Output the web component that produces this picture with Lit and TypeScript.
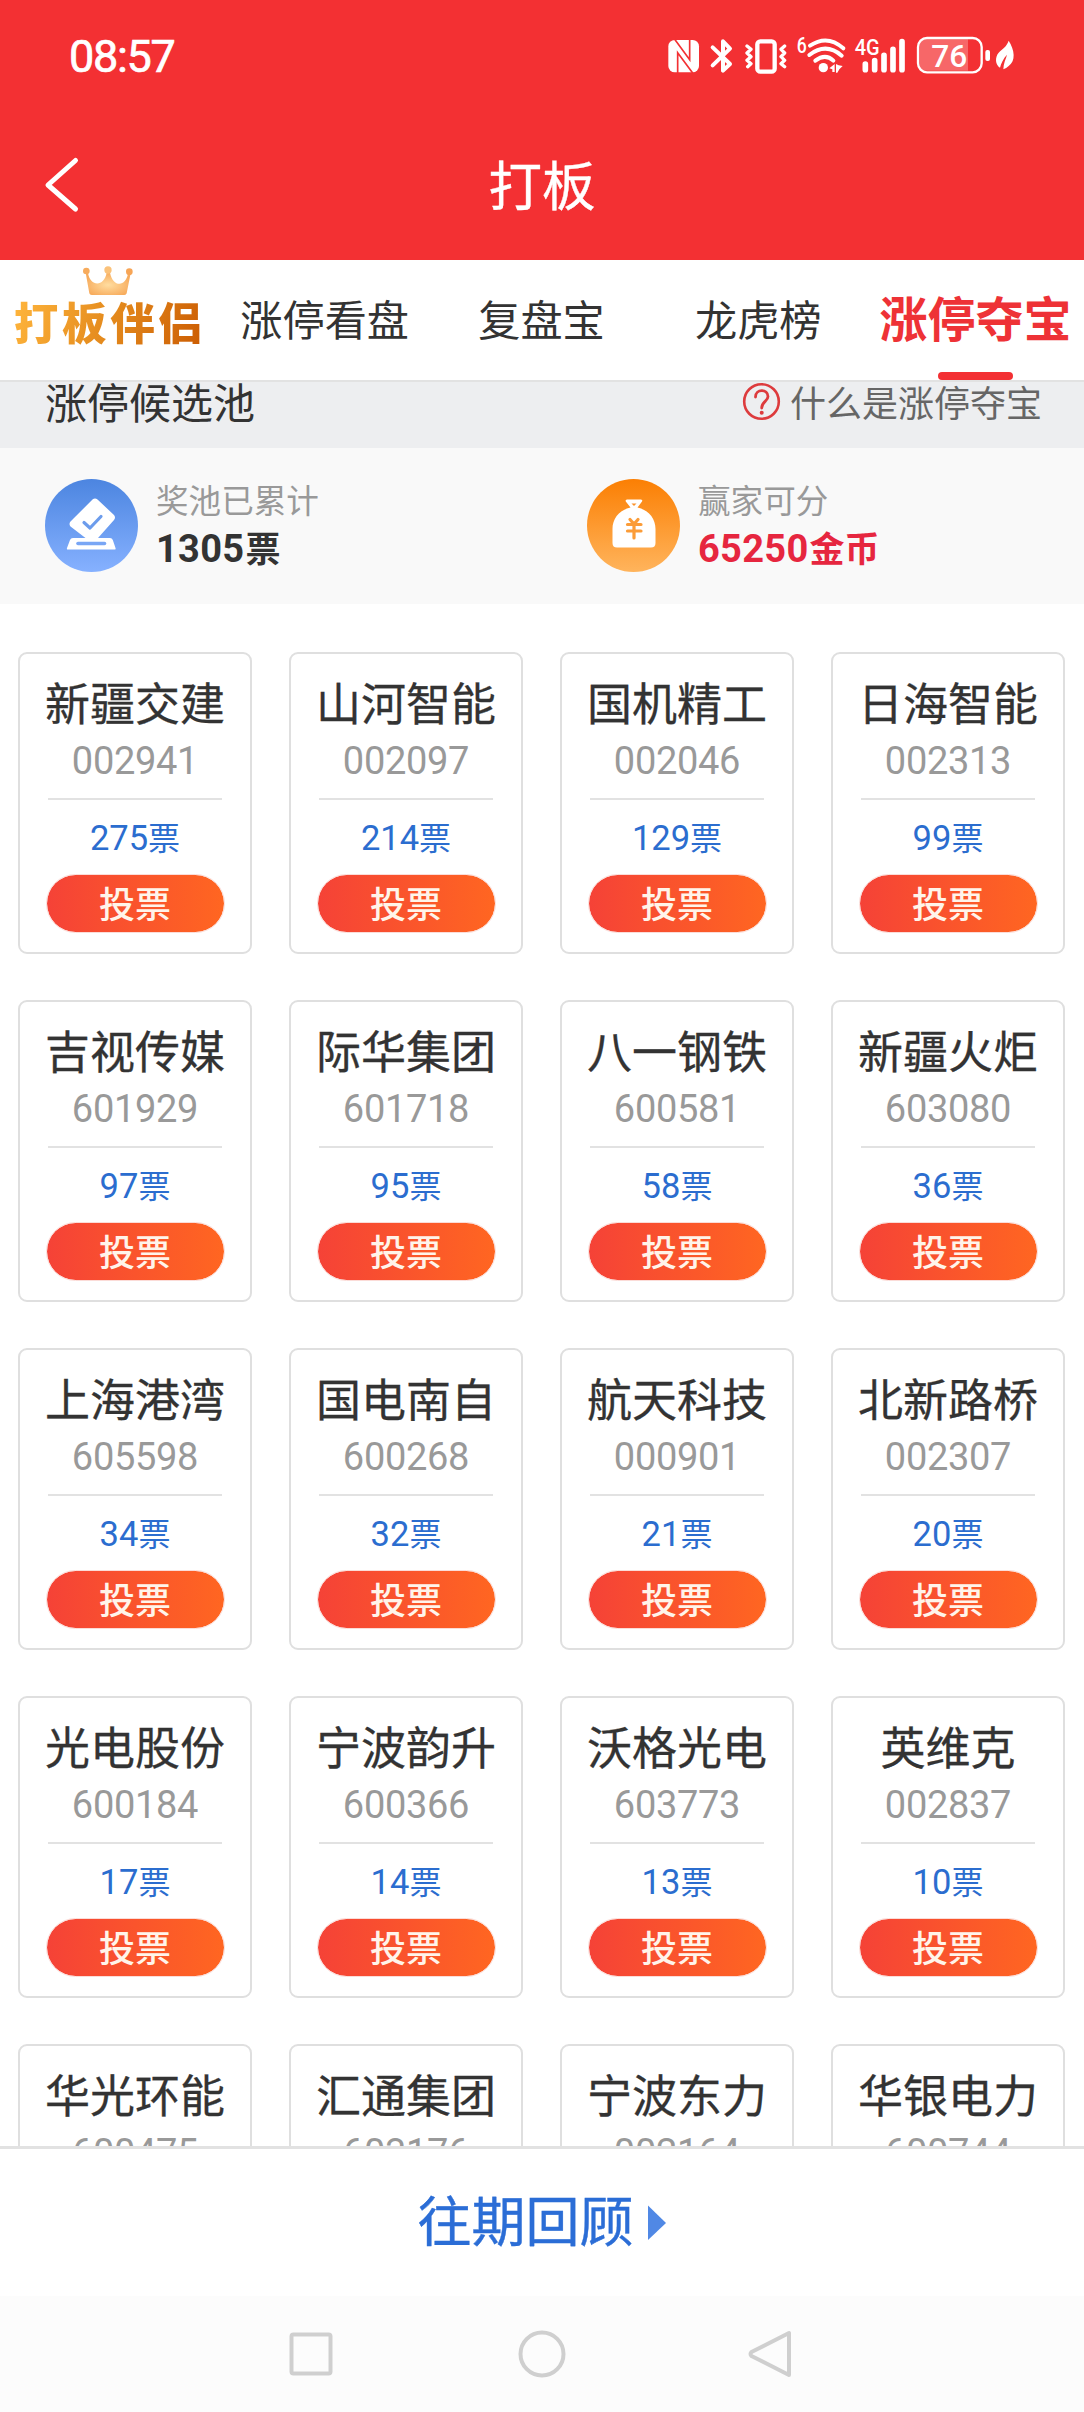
import { LitElement, html, css, svg, nothing } from "lit";
import { customElement, property } from "lit/decorators.js";

interface Stock {
  name: string;
  code: string;
  votes?: number;
}

const STOCKS: Stock[] = [
  { name: "新疆交建", code: "002941", votes: 275 },
  { name: "山河智能", code: "002097", votes: 214 },
  { name: "国机精工", code: "002046", votes: 129 },
  { name: "日海智能", code: "002313", votes: 99 },
  { name: "吉视传媒", code: "601929", votes: 97 },
  { name: "际华集团", code: "601718", votes: 95 },
  { name: "八一钢铁", code: "600581", votes: 58 },
  { name: "新疆火炬", code: "603080", votes: 36 },
  { name: "上海港湾", code: "605598", votes: 34 },
  { name: "国电南自", code: "600268", votes: 32 },
  { name: "航天科技", code: "000901", votes: 21 },
  { name: "北新路桥", code: "002307", votes: 20 },
  { name: "光电股份", code: "600184", votes: 17 },
  { name: "宁波韵升", code: "600366", votes: 14 },
  { name: "沃格光电", code: "603773", votes: 13 },
  { name: "英维克", code: "002837", votes: 10 },
  { name: "华光环能", code: "600475" },
  { name: "汇通集团", code: "603176" },
  { name: "宁波东力", code: "002164" },
  { name: "华银电力", code: "600744" },
];

@customElement("status-icons")
class StatusIcons extends LitElement {
  static styles = css`
    :host { display: block; width: 400px; height: 80px; }
    .icons { display: block; }
    .label { font-family: Roboto, sans-serif; fill: #fff; }
  `;

  render() {
    return html`<svg class="icons" width="400" height="80" viewBox="0 0 1200 240">
      ${svg`
      <rect x="85" y="60" width="92" height="97" rx="19" fill="#fff"/>
      <path d="M104 58L149 119V58M158 159L113 98V159" fill="none" stroke="#f33033" stroke-width="5"/>
      <path d="M218 82L270 132L249 152V64L270 86L218 136" fill="none" stroke="#fff" stroke-width="12" stroke-linejoin="round" stroke-linecap="round"/>
      <g fill="none" stroke="#fff" stroke-linejoin="round" stroke-linecap="round">
        <rect x="352" y="64" width="52" height="91" rx="9" stroke-width="13"/>
        <path d="M321 78L333 88L321 99L333 110L321 121L333 131L323 140M434 78L423 88L434 99L423 110L434 121L423 131L434 140" stroke-width="10"/>
        <path d="M510 77Q562 42 610 85" stroke-width="12"/>
        <path d="M508 105Q558 66 605 107" stroke-width="12"/>
        <path d="M526 122Q556 99 580 122" stroke-width="12"/>
      </g>
      <circle cx="550" cy="143" r="14" fill="#fff"/>
      <path d="M568 145L584 132V156H577V148ZM588 132L596 136L608 138L598 148L592 158H588Z" fill="#fff"/>
      <text class="label" x="470" y="99" font-size="64" font-weight="500" textLength="30" lengthAdjust="spacingAndGlyphs">6</text>
      <text class="label" x="644" y="106" font-size="67" font-weight="500" textLength="75" lengthAdjust="spacingAndGlyphs">4G</text>
      <path d="M676 132V149M704 122V149M732 106V149M759 88V149M786 65V149" stroke="#fff" stroke-width="17" stroke-linecap="round"/>
      <path d="M860 58H984V152H860Q838 152 838 130V80Q838 58 860 58Z" fill="#f76768"/>
      <rect x="834" y="54" width="191" height="103" rx="27" fill="none" stroke="#fff" stroke-width="7"/>
      <rect x="1036" y="90" width="14" height="33" rx="6" fill="#fff"/>
      <text class="label" x="874" y="140" font-size="94" font-weight="500" textLength="108" lengthAdjust="spacingAndGlyphs">76</text>
      <path d="M1106 62C1124 90 1128 122 1106 138Q1098 146 1090 148C1090 130 1098 116 1101 104C1090 116 1083 130 1080 143C1066 134 1064 112 1076 98C1088 86 1100 80 1106 62Z" fill="#fff"/>
      `}
    </svg>`;
  }
}

@customElement("stock-card")
class StockCard extends LitElement {
  @property({ attribute: false }) stock!: Stock;

  static styles = css`
    :host { display: block; }
    .card {
      box-sizing: border-box;
      height: 302px;
      border: 2px solid #dfdfdf;
      border-radius: 9px;
      padding: 18px 26px 0;
      display: flex;
      flex-direction: column;
      align-items: center;
      background: #fff;
    }
    .name {
      font-size: 45px;
      line-height: 60px;
      color: #333;
      white-space: nowrap;
      -webkit-text-stroke: 0.3px #333;
    }
    .code {
      margin-top: 7px;
      font-family: Roboto, sans-serif;
      font-size: 38px;
      line-height: 44px;
      letter-spacing: -0.3px;
      color: #999;
    }
    .rule { margin-top: 15px; width: 174px; height: 2px; background: #e2e2e2; }
    .votes {
      margin-top: 18px;
      height: 40px;
      display: flex;
      align-items: center;
      color: #2b6dcf;
    }
    .num { font-family: Roboto, sans-serif; font-size: 34.5px; line-height: 40px; }
    .unit { font-size: 32px; line-height: 36px; padding-bottom: 4px; }
    .vote {
      box-sizing: border-box;
      margin-top: 16px;
      width: 179px;
      height: 59px;
      border: 1.5px solid #fbdcd8;
      border-radius: 30px;
      padding: 0 0 4px;
      background: linear-gradient(90deg, #f54237, #ff6621) padding-box;
      font-family: inherit;
      font-size: 36px;
      line-height: 50px;
      font-weight: 500;
      color: #fff4ea;
    }
  `;

  render() {
    const { name, code, votes } = this.stock;
    return html`<div class="card">
      <div class="name">${name}</div>
      <div class="code">${code}</div>
      ${votes === undefined
        ? nothing
        : html`<div class="rule"></div>
            <div class="votes"><span class="num">${votes}</span><span class="unit">票</span></div>
            <button class="vote">投票</button>`}
    </div>`;
  }
}

@customElement("app-root")
class AppRoot extends LitElement {
  static styles = css`
    :host {
      display: flex;
      flex-direction: column;
      width: 1084px;
      height: 2412px;
      overflow: hidden;
      background: #fff;
      font-family: "Noto Sans CJK SC", sans-serif;
      color: #333;
    }
    .top { height: 260px; background: #f33033; color: #fff; flex: none; }
    .status { height: 110px; display: flex; justify-content: space-between; padding: 0 44px 0 69px; }
    .time {
      font-family: Roboto, sans-serif;
      font-size: 45px;
      line-height: 52px;
      padding-top: 31px;
      letter-spacing: -1.3px;
      -webkit-text-stroke: 0.7px #fff;
    }
    .status-right { padding-top: 20px; }
    .titlebar {
      height: 150px;
      display: grid;
      grid-template-columns: 120px 1fr 120px;
      align-items: center;
    }
    .back { display: block; margin-left: 42px; }
    .title {
      text-align: center;
      font-size: 53.5px;
      line-height: 60px;
      padding-bottom: 4px;
      -webkit-text-stroke: 0.4px #fff;
    }
    .tabs {
      flex: none;
      box-sizing: border-box;
      height: 122px;
      border-bottom: 2px solid #e2e2e2;
      display: grid;
      grid-template-columns: repeat(5, 1fr);
    }
    .tab {
      display: flex;
      flex-direction: column;
      align-items: center;
      font-size: 42.2px;
      line-height: 60px;
      padding: 28px 1px 0 0;
      white-space: nowrap;
    }
    .tab.active { font-size: 48px; font-weight: 700; color: #ee3236; padding: 26px 0 0; }
    .underline { width: 75px; height: 8px; border-radius: 4px; background: #f33033; margin-top: 26px; }
    .logo { display: flex; flex-direction: column; align-items: center; padding-top: 6px; }
    .logo-text {
      font-size: 44.5px;
      line-height: 50px;
      font-weight: 900;
      letter-spacing: 3.7px;
      margin: -2px -3.7px 0 0;
      white-space: nowrap;
      color: transparent;
      background: linear-gradient(110deg, #ffb63d 0%, #e48a1d 50%, #cd5f04 95%);
      -webkit-background-clip: text;
      background-clip: text;
    }
    .banner {
      flex: none;
      box-sizing: border-box;
      height: 66px;
      padding: 0 42px 0 45px;
      background: #edeef0;
      display: flex;
      justify-content: space-between;
      align-items: flex-start;
    }
    .banner-title { font-size: 42px; line-height: 37px; }
    .help { display: flex; align-items: flex-start; gap: 9px; font-size: 36px; line-height: 39px; color: #666; }
    .stats { flex: none; height: 156px; background: #f9f9f9; display: grid; grid-template-columns: 1fr 1fr; }
    .stat { display: flex; align-items: center; gap: 17px; padding-left: 45px; }
    .stat-text { display: flex; flex-direction: column; gap: 4px; }
    .stat-label { font-size: 32.6px; line-height: 42px; color: #999; }
    .stat-value { display: flex; align-items: center; gap: 1px; font-weight: 700; height: 50px; }
    .stat-value.red { color: #e6263f; }
    .stat-num { font-family: Roboto, sans-serif; font-size: 38px; line-height: 48px; letter-spacing: 0.3px; }
    .stat-unit { font-size: 35px; line-height: 44px; padding-bottom: 4px; }
    .list {
      flex: none;
      box-sizing: border-box;
      height: 1542px;
      overflow: hidden;
      padding: 48px 19px 0 18px;
      display: grid;
      grid-template-columns: repeat(4, 234px);
      justify-content: space-between;
      grid-auto-rows: 302px;
      row-gap: 46px;
    }
    .history {
      flex: none;
      box-sizing: border-box;
      height: 150px;
      border-top: 3px solid #e2e2e2;
      display: flex;
      justify-content: center;
      align-items: center;
      gap: 14px;
      padding-right: 1px;
      font-size: 54px;
      line-height: 60px;
      color: #2b6dd6;
    }
    .history-text { padding-bottom: 7px; -webkit-text-stroke: 0.4px #2b6dd6; }
    .nav { flex: 1; background: #fcfcfc; display: flex; justify-content: center; align-items: center; gap: 181px; }
    .ico { display: block; flex: none; }
  `;

  private renderTabs() {
    return html`<nav class="tabs">
      <div class="logo">
        <svg class="ico" width="52" height="32" viewBox="0 0 156 96">
          <defs>
            <radialGradient id="crown" cx="50%" cy="55%" r="55%">
              <stop offset="0" stop-color="#ffdda0" /><stop offset="1" stop-color="#f7ab5c" />
            </radialGradient>
          </defs>
          <path d="M11 20H18C24 62 66 64 74 20H84C92 64 132 64 138 22H146L134 82Q133 87 127 87H29Q23 87 22 82Z" fill="url(#crown)" />
          <circle cx="13" cy="15" r="10" fill="#f7ab5c" />
          <circle cx="78" cy="12" r="11" fill="#fbc27a" />
          <circle cx="142" cy="17" r="10" fill="#f7a556" />
        </svg>
        <div class="logo-text">打板伴侣</div>
      </div>
      <div class="tab">涨停看盘</div>
      <div class="tab">复盘宝</div>
      <div class="tab">龙虎榜</div>
      <div class="tab active">涨停夺宝<div class="underline"></div></div>
    </nav>`;
  }

  private renderStats() {
    return html`<section class="stats">
      <div class="stat">
        <svg class="ico" width="94" height="94" viewBox="0 0 94 94">
          <defs>
            <linearGradient id="blue" x1="0" y1="0" x2="0" y2="1">
              <stop offset="0" stop-color="#4c85e0" /><stop offset="1" stop-color="#86b1ff" />
            </linearGradient>
          </defs>
          <circle cx="46.5" cy="46.5" r="46.5" fill="url(#blue)" />
          <path d="M47.5 20.5Q50 18.3 52.5 20.5L69 36Q71 38.5 69 41L53 59H65Q67 59 67.8 61L70.5 69Q71 70.5 69.5 70.5H23Q21.5 70.5 22 69L25 61Q25.7 59 28 59H40.5L25.5 47.5Q23.5 45 25.5 42.5Z" fill="#fff" />
          <path d="M39 43.5L45 49L56 37.5" fill="none" stroke="#6c9cec" stroke-width="3.2" stroke-linecap="round" stroke-linejoin="round" />
          <path d="M33 64.5H59.5" stroke="#79a6f5" stroke-width="3.6" stroke-linecap="round" />
        </svg>
        <div class="stat-text">
          <div class="stat-label">奖池已累计</div>
          <div class="stat-value"><span class="stat-num">1305</span><span class="stat-unit">票</span></div>
        </div>
      </div>
      <div class="stat">
        <svg class="ico" width="94" height="94" viewBox="0 0 94 94">
          <defs>
            <linearGradient id="orange" x1="0" y1="0" x2="0" y2="1">
              <stop offset="0" stop-color="#fb7f03" /><stop offset="1" stop-color="#ffb45c" />
            </linearGradient>
          </defs>
          <circle cx="46.5" cy="46.5" r="46.5" fill="url(#orange)" />
          <path d="M40 20.5H54Q56 21 55 22.5L50.5 28.5C62 31 68.5 40 68.5 50V64Q68.5 68.5 64 68.5H30Q25.5 68.5 25.5 64V50C25.5 40 32 31 43.5 28.5L38.8 22.5Q38 21 40 20.5Z" fill="#fff" />
          <path d="M44.5 24.5H49.5L47 27Z" fill="#fb922a" />
          <path d="M43 40.5L47 45L51 40.5M40.5 45.5H54M40.5 52H54M47 45V59" fill="none" stroke="#fb9c38" stroke-width="3.2" stroke-linecap="round" />
        </svg>
        <div class="stat-text">
          <div class="stat-label">赢家可分</div>
          <div class="stat-value red"><span class="stat-num">65250</span><span class="stat-unit">金币</span></div>
        </div>
      </div>
    </section>`;
  }

  render() {
    return html`
      <header class="top">
        <div class="status">
          <div class="time">08:57</div>
          <div class="status-right"><status-icons></status-icons></div>
        </div>
        <div class="titlebar">
          <svg class="back" width="40" height="60" viewBox="0 0 40 60">
            <path d="M33.5 5.5L6 30L33.5 54" fill="none" stroke="#fff" stroke-width="5" stroke-linecap="round" stroke-linejoin="round" />
          </svg>
          <div class="title">打板</div>
        </div>
      </header>
      ${this.renderTabs()}
      <div class="banner">
        <div class="banner-title">涨停候选池</div>
        <div class="help">
          <svg class="ico" width="39" height="39" viewBox="0 0 39 39">
            <circle cx="19.5" cy="19.5" r="17.3" fill="none" stroke="#dd3b3d" stroke-width="2.6" />
            <path d="M13.5 15C13.5 6.5 26 6.5 26 14.5C26 19.5 19.7 19.5 19.7 26" fill="none" stroke="#dd3b3d" stroke-width="2.8" stroke-linecap="round" />
            <circle cx="19.7" cy="30.8" r="2" fill="#dd3b3d" />
          </svg>
          <span>什么是涨停夺宝</span>
        </div>
      </div>
      ${this.renderStats()}
      <main class="list">
        ${STOCKS.map((s) => html`<stock-card .stock=${s}></stock-card>`)}
      </main>
      <div class="history">
        <span class="history-text">往期回顾</span>
        <svg class="ico" width="18" height="36" viewBox="0 0 18 36"><path d="M0 0.5L18 18L0 35Z" fill="#5088e5" /></svg>
      </div>
      <footer class="nav">
        <svg class="ico" width="48" height="48" viewBox="0 0 48 48"><rect x="2.5" y="4.5" width="39" height="39" rx="2" fill="none" stroke="#cfcfcf" stroke-width="4" /></svg>
        <svg class="ico" width="48" height="48" viewBox="0 0 48 48"><circle cx="24" cy="24" r="21.5" fill="none" stroke="#cfcfcf" stroke-width="4" /></svg>
        <svg class="ico" width="48" height="48" viewBox="0 0 48 48"><path d="M42 3V45L4.5 26Q2.5 24 4.5 22Z" fill="none" stroke="#cfcfcf" stroke-width="4" stroke-linejoin="round" /></svg>
      </footer>
    `;
  }
}
